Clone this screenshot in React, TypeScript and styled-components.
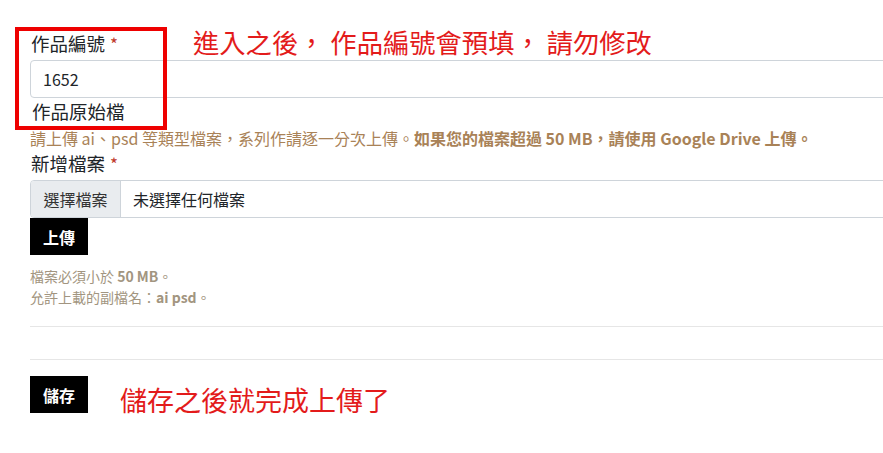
import React from 'react'
import styled, { createGlobalStyle } from 'styled-components'

const GlobalStyle = createGlobalStyle`
  html, body {
    margin: 0;
    padding: 0;
    background: #ffffff;
    overflow: hidden;
  }
  body {
    font-family: "Noto Sans CJK TC", "Noto Sans", sans-serif;
    color: #212529;
  }
`

const Page = styled.div`
  position: relative;
  width: 883px;
  height: 453px;
  overflow: hidden;
`

const Form = styled.div`
  width: 900px;
  padding: 30px 0 0 30px;
  display: flex;
  flex-direction: column;
`

const Label = styled.div`
  font-size: 18.5px;
  line-height: 27px;
  padding-left: 1px;
  margin-bottom: 3px;
  color: #212529;
`

const Required = styled.span`
  color: #c0392b;
  margin-left: 5px;
  font-size: 17px;
`

const TextInput = styled.div`
  height: 38px;
  box-sizing: border-box;
  border: 1px solid #ced4da;
  border-radius: 4px;
  padding: 0 12px;
  display: flex;
  align-items: center;
  font-size: 16px;
  color: #212529;
`

const SectionTitle = styled.div`
  font-size: 18.5px;
  line-height: 26px;
  padding-left: 2px;
`

const Help = styled.div`
  font-size: 16px;
  line-height: 24px;
  margin-top: 2px;
  color: #a98257;
  b {
    font-weight: 700;
  }
`

const FileField = styled.div`
  height: 38px;
  box-sizing: border-box;
  border: 1px solid #ced4da;
  border-radius: 4px 0 0 4px;
  display: flex;
  align-items: stretch;
  font-size: 16px;
  overflow: hidden;
`

const FileButton = styled.div`
  width: 89px;
  background: #e9ecef;
  border-right: 1px solid #ced4da;
  display: flex;
  align-items: center;
  justify-content: center;
  color: #333;
`

const FileName = styled.div`
  padding-left: 12px;
  display: flex;
  align-items: center;
  color: #212529;
`

const BlackButton = styled.div`
  width: 58px;
  height: 37px;
  background: #000;
  color: #fff;
  font-size: 16px;
  font-weight: 700;
  display: flex;
  align-items: center;
  justify-content: center;
`

const Notes = styled.div`
  margin-top: 11px;
  font-size: 14px;
  line-height: 21px;
  color: #a29580;
  b {
    font-weight: 700;
  }
`

const Rule = styled.div<{ $gap: number }>`
  height: 1px;
  background: #e6e6e6;
  margin-top: ${p => p.$gap}px;
`

const SaveRow = styled.div`
  margin-top: 16px;
  display: flex;
  align-items: center;
`

const Highlight = styled.div`
  position: absolute;
  left: 15px;
  top: 27px;
  width: 152px;
  height: 103px;
  box-sizing: border-box;
  border: 4px solid #ee0000;
`

const Note = styled.div<{ $left: number; $top: number; $size: number }>`
  position: absolute;
  left: ${p => p.$left}px;
  top: ${p => p.$top}px;
  font-size: ${p => p.$size}px;
  line-height: 30px;
  color: #e31b1b;
  white-space: nowrap;
`

export default function App() {
  return (
    <Page>
      <GlobalStyle />
      <Form>
        <Label>
          作品編號<Required>*</Required>
        </Label>
        <TextInput>1652</TextInput>
        <SectionTitle>作品原始檔</SectionTitle>
        <Help>
          請上傳 ai、psd 等類型檔案，系列作請逐一分次上傳。
          <b>如果您的檔案超過 50 MB，請使用 Google Drive 上傳。</b>
        </Help>
        <Label>
          新增檔案<Required>*</Required>
        </Label>
        <FileField>
          <FileButton>選擇檔案</FileButton>
          <FileName>未選擇任何檔案</FileName>
        </FileField>
        <BlackButton>上傳</BlackButton>
        <Notes>
          檔案必須小於 <b>50 MB</b>。
          <br />
          允許上載的副檔名：<b>ai psd</b>。
        </Notes>
        <Rule $gap={18} />
        <Rule $gap={32} />
        <SaveRow>
          <BlackButton>儲存</BlackButton>
        </SaveRow>
      </Form>
      <Highlight />
      <Note $left={193} $top={27} $size={26.3}>進入之後，&nbsp;作品編號會預填，&nbsp;請勿修改</Note>
      <Note $left={120} $top={385} $size={27}>儲存之後就完成上傳了</Note>
    </Page>
  )
}
